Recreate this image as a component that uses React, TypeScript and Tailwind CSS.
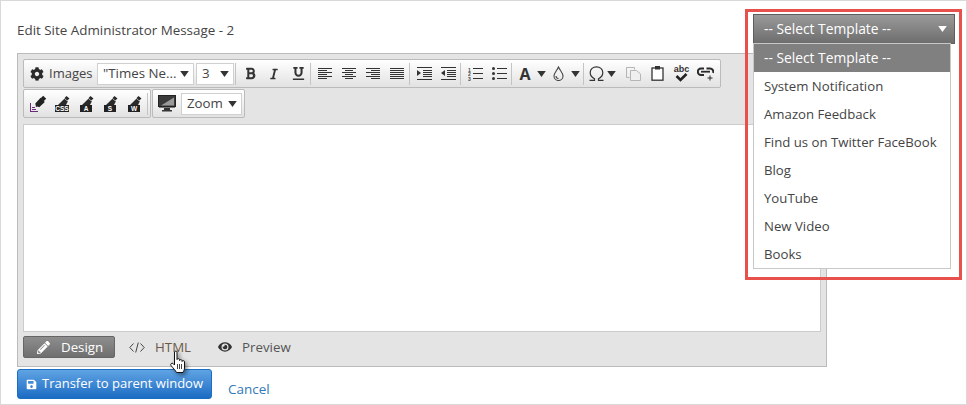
import React from "react";
import { FaCog, FaBold, FaItalic, FaUnderline, FaPencilAlt, FaEye, FaSave } from "react-icons/fa";

const font = { fontFamily: '"Open Sans", "Liberation Sans", sans-serif' };

const Sep = () => <span className="w-px h-[22px] bg-[#c4c4c4] mr-[2px] shrink-0" />;
const Caret = ({ c = "#333" }: { c?: string }) => (
  <svg width="9" height="6" viewBox="0 0 10 7" className="shrink-0"><path d="M0 0h10L5 7z" fill={c} /></svg>
);
const Btn = ({ children, w = "w-6" }: { children: React.ReactNode; w?: string }) => (
  <span className={`${w} h-[22px] flex items-center justify-center shrink-0 text-[#333]`}>{children}</span>
);
const Lines = ({ rows }: { rows: [number, number][] }) => (
  <svg width="14" height="13" viewBox="0 0 14 13">
    {rows.map(([x, w], i) => (
      <rect key={i} x={x} y={i * 2 + 1} width={w} height="1" fill="#333" />
    ))}
  </svg>
);
const Indent = ({ out }: { out?: boolean }) => (
  <svg width="15" height="13" viewBox="0 0 15 13" fill="#333">
    <rect x="0" y="0" width="15" height="1" />
    <rect x="6" y="3" width="9" height="1" />
    <rect x="6" y="5" width="9" height="1" />
    <rect x="6" y="7" width="9" height="1" />
    <rect x="6" y="9" width="9" height="1" />
    <rect x="0" y="12" width="15" height="1" />
    {out ? <path d="M4 3v6L0 6z" /> : <path d="M0 3v6l4-3z" />}
  </svg>
);
const ListOl = () => (
  <svg width="15" height="14" viewBox="0 0 15 14">
    <text x="0" y="4.5" fontSize="5" fontWeight="700" fill="#444" fontFamily="Liberation Sans">1</text>
    <text x="0" y="9.2" fontSize="5" fontWeight="700" fill="#444" fontFamily="Liberation Sans">2</text>
    <text x="0" y="14" fontSize="5" fontWeight="700" fill="#444" fontFamily="Liberation Sans">3</text>
    <rect x="5" y="1" width="10" height="1" fill="#333" />
    <rect x="5" y="6" width="10" height="1" fill="#333" />
    <rect x="5" y="11" width="10" height="1" fill="#333" />
  </svg>
);
const ListUl = () => (
  <svg width="15" height="13" viewBox="0 0 15 13" fill="#333">
    <circle cx="1.5" cy="1.5" r="1.5" /><circle cx="1.5" cy="6.5" r="1.5" /><circle cx="1.5" cy="11.5" r="1.5" />
    <rect x="5" y="1" width="10" height="1" /><rect x="5" y="6" width="10" height="1" /><rect x="5" y="11" width="10" height="1" />
  </svg>
);
const Drop = () => (
  <svg width="11" height="15" viewBox="0 0 11 15" fill="none" stroke="#444" strokeWidth="1.1">
    <path d="M5.5 1 C7 4.5 10 7 10 10 A4.5 4.5 0 0 1 1 10 C1 7 4 4.5 5.5 1Z" />
    <path d="M3 10 A2.5 2.5 0 0 0 5.5 12.5" />
  </svg>
);
const Omega = () => (
  <svg width="15" height="15" viewBox="0 0 15 15" fill="none" stroke="#333" strokeWidth="1.2">
    <path d="M.5 14.300h5v-1.600C3 11.500 1.200 9.500 1.200 6.500 1.200 3 4 .8 7.500.8s6.300 2.200 6.300 5.700c0 3-1.800 5-4.300 6.200v1.600h5" />
  </svg>
);
const Copy = () => (
  <svg width="15" height="14" viewBox="0 0 15 14" fill="none" stroke="#b5b5b5">
    <path d="M8.5 2.5V.5h-8v10h3" /><path d="M4.5 3.5h6l4 3.5v6.5h-10z" fill="#efefef" />
  </svg>
);
const Paste = () => (
  <svg width="13" height="15" viewBox="0 0 13 15">
    <rect x="1" y="2" width="11" height="12.2" fill="#fff" stroke="#333" strokeWidth="1.3" />
    <rect x="4" y="0" width="5" height="3.5" fill="#333" />
  </svg>
);
const Spell = () => (
  <svg width="17" height="17" viewBox="0 0 17 17">
    <text x="8.5" y="7" textAnchor="middle" fontSize="9" fontWeight="700" fill="#333" fontFamily="Liberation Sans">abc</text>
    <path d="M3.5 11l4 4 6-6" fill="none" stroke="#222" strokeWidth="2.6" />
  </svg>
);
const LinkPlus = () => (
  <svg width="17" height="14" viewBox="0 0 17 14" fill="none" stroke="#2a2a2a">
    <path d="M7 1.5H4a3.2 3.2 0 0 0 0 6.4h3" strokeWidth="2" />
    <path d="M9.5 1.5h3.5a3.2 3.2 0 0 1 3 4.4" strokeWidth="2" />
    <path d="M4 4.7h9" strokeWidth="1.8" />
    <path d="M13 8.5v5M10.5 11h5" strokeWidth="1" />
  </svg>
);
const Brush = ({ label, first }: { label?: string; first?: boolean }) =>
  first ? (
    <svg width="17" height="17" viewBox="0 0 17 17">
      <path d="M13.2 0.8l3 3-2.6 2.4-2.9-2.9z" fill="#222" />
      <path d="M10.6 2.8l4.2 4.2-5.6 5.2-1.6-.6-1.6.3L5.300 8.400z" fill="#222" />
      <g fill="#6b2a7a"><rect x="0" y="8" width="1" height="9" /><rect x="0" y="16" width="8" height="1" /><rect x="2" y="14" width="4" height="1" /><rect x="2" y="12" width="3" height="1" /></g>
    </svg>
  ) : (
    <svg width="15" height="16" viewBox="0 0 15 16">
      <path d="M11.500 0l3 2.400-2.200 2.200-2.900-2.400z" fill="#2a2a2a" />
      <path d="M9.400 2.800l3.400 2.700-1.800 3.500H3z" fill="#2a2a2a" />
      <rect x={label === "CSS" ? 0 : 1} y="9" width={label === "CSS" ? 14 : 12} height="7" fill="#222" />
      <text x={7} y="15" textAnchor="middle" fontSize="6.500" fontWeight="700" fill="#fff" fontFamily="Liberation Sans">{label}</text>
    </svg>
  );
const Monitor = () => (
  <svg width="18" height="17" viewBox="0 0 18 17">
    <rect x="0.5" y="0.5" width="17" height="11" fill="#3a3a3a" stroke="#222" />
    <path d="M3 10.500 L16 2.500 V10.500z" fill="#9a9a9a" />
    <rect x="1" y="12" width="16" height="1" fill="#777" />
    <rect x="6" y="13" width="6" height="2" fill="#333" />
    <rect x="4" y="15" width="10" height="1.500" fill="#333" />
  </svg>
);
const Code = () => (
  <svg width="16" height="11" viewBox="0 0 16 11" fill="none" stroke="#444" strokeWidth="1">
    <path d="M4.500 1.500L.8 5.500l3.700 4M11.500 1.500l3.700 4-3.700 4M9.300.5l-2.600 10" />
  </svg>
);
const Select = ({ text, w }: { text: string; w: string }) => (
  <span className={`${w} h-[22px] bg-white border border-[#d0d0d0] flex items-center justify-between pl-[5px] pr-[4px] text-[13.3px] text-[#444] shrink-0`}>
    <span className="whitespace-nowrap">{text}</span>
    <Caret />
  </span>
);
const Bar = ({ children, w }: { children: React.ReactNode; w: string }) => (
  <div className={`${w} h-[29px] flex items-center border border-[#bbb] rounded-[2px] bg-gradient-to-b from-white to-[#e2e2e2]`}>{children}</div>
);
const Hand = () => (
  <svg width="22" height="26" viewBox="0 0 22 26" className="drop-shadow-[2px_2px_2px_rgba(0,0,0,0.45)]">
    <path
      d="M5.500 2 C5.500 .8 8 .8 8 2 V9.500 C8 8.400 10.500 8.400 10.500 9.500 V10.500 C10.500 9.400 13 9.400 13 10.500 V11.500 C13 10.400 15.500 10.400 15.500 11.500 V18 C15.500 20 14.500 21 14 22.500 H7.500 C6.500 20.500 4.500 18.500 2 15.500 C1 14 3 12.500 4 13.500 L5.500 15 Z"
      fill="#fff" stroke="#111" strokeWidth="1" strokeLinejoin="round"
    />
    <path d="M8.500 14v5M10.500 14v5M12.500 14v5" stroke="#111" strokeWidth="0.8" />
  </svg>
);

const options = ["System Notification", "Amazon Feedback", "Find us on Twitter FaceBook", "Blog", "YouTube", "New Video", "Books"];

export default function App() {
  return (
    <div style={font} className="relative w-[967px] h-[405px] bg-white border border-[#d9d9d9] pl-4 overflow-hidden text-[#444]">
      <div className="h-[52px] pt-[20px] text-[13.4px] leading-[18px] text-[#444]">Edit Site Administrator Message - 2</div>

      <div className="w-[810px] h-[314px] bg-[#e4e4e4] border border-[#bbb] pt-[5px] px-[5px]">
        <Bar w="w-[698px]">
          <FaCog className="ml-[6px] text-[14px] text-[#2b2b2b] shrink-0" />
          <span className="ml-[5px] text-[13px] text-[#444] w-[44px]">Images</span>
          <span className="ml-[4px]"><Select text={'"Times Ne...'} w="w-[97px]" /></span>
          <span className="ml-[2px]"><Select text="3" w="w-[38px]" /></span>
          <span className="ml-px" /><Sep />
          <Btn><FaBold className="text-[13px]" /></Btn>
          <Btn><FaItalic className="text-[12px]" /></Btn>
          <Btn><FaUnderline className="text-[13px]" /></Btn>
          <Sep />
          <Btn><Lines rows={[[0, 14], [0, 9], [0, 14], [0, 9], [0, 14], [0, 9]]} /></Btn>
          <Btn><Lines rows={[[0, 14], [3, 8], [0, 14], [3, 8], [0, 14], [3, 8]]} /></Btn>
          <Btn><Lines rows={[[0, 14], [5, 9], [0, 14], [5, 9], [0, 14], [5, 9]]} /></Btn>
          <Btn><Lines rows={[[0, 14], [0, 14], [0, 14], [0, 14], [0, 14], [0, 14]]} /></Btn>
          <Sep />
          <Btn><Indent /></Btn>
          <Btn><Indent out /></Btn>
          <Sep />
          <Btn><ListOl /></Btn>
          <Btn><ListUl /></Btn>
          <Sep />
          <Btn w="w-[22px]"><span className="text-[16px] font-bold leading-none text-[#333]">A</span></Btn>
          <Btn w="w-[10px]"><Caret /></Btn>
          <Btn w="w-[24px]"><Drop /></Btn>
          <Btn w="w-[10px]"><Caret /></Btn>
          <span className="ml-[3px]" /><Sep />
          <Btn w="w-[20px]"><Omega /></Btn>
          <Btn w="w-[10px]"><Caret /></Btn>
          <span className="w-[5px]" />
          <Btn><Copy /></Btn>
          <Btn><Paste /></Btn>
          <Btn><Spell /></Btn>
          <Btn><LinkPlus /></Btn>
        </Bar>
        <div className="flex gap-px mt-px">
          <Bar w="w-[128px]">
            <span className="w-[2px]" />
            <Btn><Brush first /></Btn>
            <Btn><Brush label="CSS" /></Btn>
            <Btn><Brush label="A" /></Btn>
            <Btn><Brush label="S" /></Btn>
            <Btn><Brush label="W" /></Btn>
            <span className="w-px h-[22px] bg-[#c4c4c4] ml-[1px]" />
          </Bar>
          <Bar w="w-[93px]">
            <span className="ml-[5px] mr-[5px] shrink-0 flex"><Monitor /></span>
            <Select text="Zoom" w="w-[61px]" />
          </Bar>
        </div>
        <div className="w-[798px] h-[208px] mt-[6px] bg-white border border-[#ccc]" />
        <div className="flex items-center h-[30px] text-[13.3px] text-[#555]">
          <span className="w-[92px] h-[22px] flex items-center bg-gradient-to-b from-[#8e8e8e] to-[#6f6f6f] border border-[#666] rounded-[2px] text-white">
            <FaPencilAlt className="ml-[13px] text-[13px] text-white" />
            <span className="ml-[11px] pt-px">Design</span>
          </span>
          <span className="ml-[14px] flex items-center">
            <Code />
            <span className="ml-[10px] pt-px text-[#6b5a4a]">HTML</span>
          </span>
          <span className="ml-[27px] flex items-center">
            <FaEye className="text-[14px] text-[#333]" />
            <span className="ml-[10px] pt-px">Preview</span>
          </span>
        </div>
      </div>

      <div className="flex items-start mt-[2px]">
        <button className="w-[195px] h-[30px] flex items-center justify-center gap-[5px] rounded-[3px] border border-[#1b6ec2] bg-gradient-to-b from-[#5fa3e3] to-[#1a6cc4] text-white text-[13px]">
          <FaSave className="text-[11px] text-white" />
          <span>Transfer to parent window</span>
        </button>
        <a className="ml-4 mt-[11px] text-[13.5px] leading-[18px] text-[#337ab7]">Cancel</a>
      </div>

      <div className="absolute left-[744px] top-[8px] w-[217px] h-[271px] border-[3px] border-[#e8504b]">
        <div className="absolute left-[5px] top-[2px] w-[202px] h-[30px] flex items-center justify-between pl-[10px] pr-[7px] bg-gradient-to-b from-[#9a9a9a] to-[#6e6e6e] border border-[#5e5e5e] text-white text-[13.8px]">
          <span>-- Select Template --</span>
          <Caret c="#fff" />
        </div>
        <div className="absolute left-[5px] top-[31px] w-[198px] h-[226px] bg-white border border-[#c8c8c8] text-[13.2px] text-[#444]">
          <div className="h-[28px] bg-[#808080] text-white text-[13.8px] flex items-center pl-[10px]">-- Select Template --</div>
          {options.map((o) => (
            <div key={o} className="h-[28px] pt-px flex items-center pl-[10px] whitespace-nowrap">{o}</div>
          ))}
        </div>
      </div>

      <div className="absolute left-[168px] top-[349px]"><Hand /></div>
    </div>
  );
}
